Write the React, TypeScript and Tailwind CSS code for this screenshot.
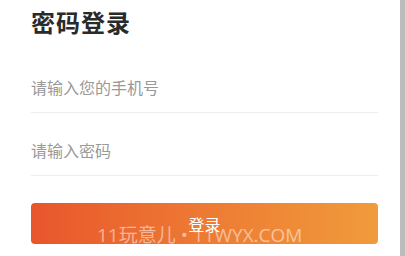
import React from "react";

export default function App() {
  const cjk = { fontFamily: '"Noto Sans CJK SC", "Noto Sans", sans-serif' };
  return (
    <div className="relative flex w-[405px] h-[256px] bg-white overflow-hidden" style={cjk}>
      <div className="flex-1 pl-[31px] pr-[22px]">
        <div className="h-[50px] pt-[10px]">
          <h1 className="text-[24px] leading-[24px] font-bold text-[#2a2a2a] tracking-[1px]">密码登录</h1>
        </div>
        <div className="h-[63px] pt-[25px] border-b border-[#eeeeee]">
          <div className="text-[16px] leading-[24px] text-[#999999]">请输入您的手机号</div>
        </div>
        <div className="h-[63px] pt-[25px] border-b border-[#eeeeee]">
          <div className="text-[16px] leading-[24px] text-[#999999]">请输入密码</div>
        </div>
        <button className="mt-[27px] w-full h-[41px] rounded-[4px] bg-gradient-to-r from-[#e8552c] to-[#f09b3b] text-white text-[16px] leading-[24px] flex items-center justify-center">
          登录
        </button>
      </div>
      <div className="w-[5px] bg-[#bcbcbc]" />
      <div
        className="absolute left-[97px] top-[223px] text-[19px] leading-[24px] text-white/50 whitespace-nowrap"
        style={{ fontFamily: '"Open Sans", "Noto Sans CJK SC", sans-serif' }}
      >
        11玩意儿 • 11WYX.COM
      </div>
    </div>
  );
}
